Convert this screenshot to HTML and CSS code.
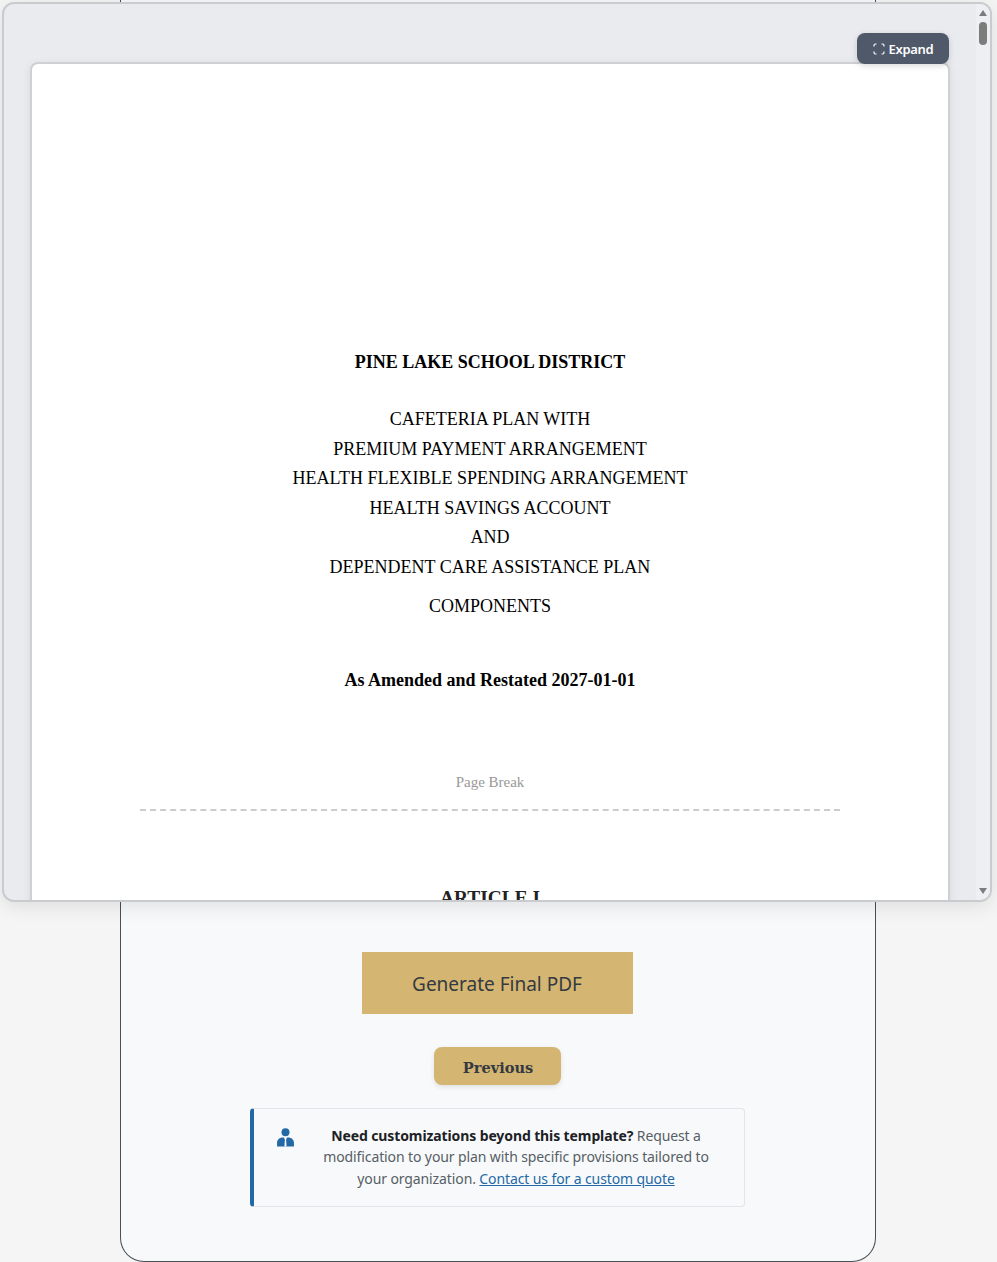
FILE: index.html
```html
<!DOCTYPE html>
<html lang="en">
<head>
<meta charset="utf-8">
<title>Generate Final PDF</title>
<link rel="stylesheet" href="styles.css">
</head>
<body>
<main class="card">
  <div class="actions">
    <button class="btn-generate">Generate Final PDF</button>
    <button class="btn-previous">Previous</button>
    <aside class="notice">
      <svg class="notice-icon" viewBox="1 0 16 18" aria-hidden="true">
        <circle cx="9" cy="4" r="3.8" fill="#2369a6"/>
        <path d="M1 17.5v-3.5c0-3 2.6-5 5.2-5H7.6L9 12.2 10.4 9h1.4c2.600 0 5.200 2 5.200 5v3.500z" fill="#2369a6"/>
        <path d="M8.200 9h1.600l-.3 1.300.5 7.200H8l.5-7.200z" fill="#fff"/>
      </svg>
      <p class="notice-text"><strong>Need customizations beyond this template?</strong> Request a modification to your plan with specific provisions tailored to your organization. <a href="#">Contact us for a custom quote</a></p>
    </aside>
  </div>
</main>
<section class="preview">
  <div class="preview-scroll">
    <button class="btn-expand">
      <svg viewBox="0 0 12 12" aria-hidden="true"><path d="M1 3.500V2.500A1.500 1.500 0 0 1 2.500 1h1M8.500 1h1A1.500 1.500 0 0 1 11 2.500v1M11 8.500v1A1.500 1.500 0 0 1 9.500 11h-1M3.500 11h-1A1.500 1.500 0 0 1 1 9.500v-1" fill="none" stroke="#fff" stroke-width="1.200"/></svg>
      Expand
    </button>
    <article class="doc">
      <h1 class="doc-org">PINE LAKE SCHOOL DISTRICT</h1>
      <p class="doc-lines">CAFETERIA PLAN WITH<br>PREMIUM PAYMENT ARRANGEMENT<br>HEALTH FLEXIBLE SPENDING ARRANGEMENT<br>HEALTH SAVINGS ACCOUNT<br>AND<br>DEPENDENT CARE ASSISTANCE PLAN</p>
      <p class="doc-components">COMPONENTS</p>
      <p class="doc-date">As Amended and Restated 2027-01-01</p>
      <div class="page-break">Page Break</div>
      <h2 class="doc-article">ARTICLE I</h2>
    </article>
  </div>
  <div class="scrollbar">
    <span class="arrow arrow-up"></span>
    <span class="thumb"></span>
    <span class="arrow arrow-down"></span>
  </div>
</section>
</body>
</html>
```
FILE: styles.css
```css
* { box-sizing: border-box; }
html, body { height: 100%; }
body {
  margin: 0;
  height: 1262px;
  overflow: hidden;
  background: #f5f5f5;
  font-family: "Noto Sans", "Open Sans", sans-serif;
  display: flex;
  justify-content: center;
}
.card {
  width: 756px;
  height: 1262px;
  margin-left: -1px;
  background: #f8f9fa;
  border: 1px solid #495057;
  border-top: 0;
  border-radius: 0 0 24px 24px;
  display: flex;
  flex-direction: column;
  justify-content: flex-end;
  padding-bottom: 54px;
}
.actions {
  display: flex;
  flex-direction: column;
  align-items: center;
  padding-right: 2px;
}
.btn-generate {
  width: 271px;
  height: 62px;
  border: 0;
  background: #d4b572;
  color: #343a40;
  font: 400 19px "Noto Sans", sans-serif;
  padding-top: 2px;
}
.btn-previous {
  margin-top: 33px;
  width: 127px;
  height: 38px;
  border: 0;
  border-radius: 8px;
  background: #d4b572;
  color: #343a40;
  font: 700 14.600px "DejaVu Serif", serif;
  padding: 3px 0 0 2px;
  box-shadow: 0 2px 5px rgba(0,0,0,.1);
}
.notice {
  margin-top: 23px;
  width: 495px;
  height: 99px;
  background: #f8f9fa;
  border: 1px solid #e2e5e8;
  border-left: 4px solid #2369a6;
  border-radius: 4px;
  padding: 16px 21px 0 23px;
  display: flex;
  align-items: flex-start;
}
.notice-icon { width: 17px; height: 19px; flex: none; margin-top: 3px; }
.notice-text {
  margin: 0 0 0 16px;
  flex: 1;
  text-align: center;
  font-size: 14px;
  letter-spacing: -.11px;
  line-height: 21.400px;
  color: #565e66;
}
.notice-text strong { color: #1c2126; font-weight: 700; }
.notice-text a { color: #2369a6; }
.preview {
  position: absolute;
  left: 2px;
  top: 2px;
  width: 990px;
  height: 900px;
  display: flex;
  background: #e9ebef;
  border: 2px solid #c9cbce;
  border-radius: 12px;
  overflow: hidden;
  box-shadow: 0 4px 20px rgba(0,0,0,.1);
}
.preview-scroll {
  flex: 1;
  padding: 58px 0 0 26px;
  position: relative;
  overflow: hidden;
}
.btn-expand {
  position: absolute;
  right: 27px;
  top: 29px;
  z-index: 2;
  width: 92px;
  height: 31px;
  border: 0;
  border-radius: 8px;
  background: #4f5969;
  color: #fff;
  font: 600 13px "Noto Sans", sans-serif;
  letter-spacing: -.3px;
  display: flex;
  align-items: center;
  justify-content: center;
  gap: 4px;
  box-shadow: 0 2px 6px rgba(0,0,0,.15);
}
.btn-expand svg { width: 12px; height: 12px; }
.doc {
  width: 920px;
  height: 1200px;
  background: #fff;
  border: 2px solid #ced0d4;
  border-radius: 8px;
  font-family: "Liberation Serif", serif;
  color: #000;
  text-align: center;
  padding-top: 286px;
  box-shadow: 0 2px 8px rgba(0,0,0,.08);
}
.doc-org { margin: 0; font-size: 18px; font-weight: 700; line-height: 24px; }
.doc-lines { margin: 31px 0 0; font-size: 18px; line-height: 29.600px; }
.doc-components { margin: 9px 0 0; font-size: 18px; line-height: 29.600px; }
.doc-date { margin: 47px 0 0; font-size: 18px; font-weight: 700; line-height: 24px; }
.page-break {
  margin: 82px auto 0;
  width: 700px;
  padding-bottom: 19px;
  border-bottom: 2px dashed #ccc;
  color: #999;
  font-size: 15px;
  line-height: 16px;
}
.doc-article { margin: 75px 0 0; font-size: 19.400px; font-weight: 700; line-height: 24px; color: #222; }
.scrollbar {
  width: 14px;
  flex: none;
  background: #eeeff2;
  position: relative;
  display: flex;
  flex-direction: column;
  align-items: center;
}
.arrow { width: 0; height: 0; border-left: 4px solid transparent; border-right: 4px solid transparent; }
.arrow-up { margin-top: 6px; border-bottom: 6px solid #7c7c7c; }
.thumb { margin-top: 6px; width: 8px; height: 23px; border-radius: 4px; background: #7c7c7c; }
.arrow-down { margin-top: auto; margin-bottom: 6px; border-top: 6px solid #7c7c7c; }
```
